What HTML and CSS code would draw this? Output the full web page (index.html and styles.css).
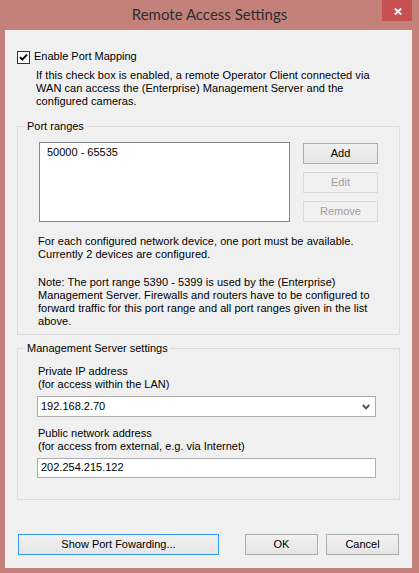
FILE: index.html
```html
<!DOCTYPE html>
<html>
<head>
<meta charset="utf-8">
<title>Remote Access Settings</title>
<link rel="stylesheet" href="styles.css">
</head>
<body>
<div class="window">
  <div class="titlebar">
    <span class="spacer"></span>
    <div class="title">Remote Access Settings</div>
    <div class="title-right">
      <button class="close" aria-label="Close">
        <svg width="8" height="7" viewBox="0 0 8 7"><path d="M0.8 0.5 L7.2 6.5 M7.2 0.5 L0.8 6.5" stroke="#fff" stroke-width="1.8" fill="none"/></svg>
      </button>
    </div>
  </div>
  <div class="client">
    <label class="check-row">
      <span class="checkbox">
        <svg width="11" height="11" viewBox="0 0 11 11"><polyline points="2,5.2 4.3,7.6 9,2.6" stroke="#000" stroke-width="1.9" fill="none"/></svg>
      </span>
      <span class="check-label">Enable Port Mapping</span>
    </label>
    <p class="desc">If this check box is enabled, a remote Operator Client connected via<br>WAN can access the (Enterprise) Management Server and the<br>configured cameras.</p>

    <fieldset class="group ports">
      <legend>Port ranges</legend>
      <div class="list-row">
        <div class="listbox"><div class="item">50000 - 65535</div></div>
        <div class="side-buttons">
          <button class="btn">Add</button>
          <button class="btn disabled">Edit</button>
          <button class="btn disabled">Remove</button>
        </div>
      </div>
      <p class="info">For each configured network device, one port must be available.<br>Currently 2 devices are configured.</p>
      <p class="note">Note: The port range 5390 - 5399 is used by the (Enterprise)<br>Management Server. Firewalls and routers have to be configured to<br>forward traffic for this port range and all port ranges given in the list<br>above.</p>
    </fieldset>

    <fieldset class="group server">
      <legend>Management Server settings</legend>
      <p class="field-label">Private IP address<br>(for access within the LAN)</p>
      <div class="combo">
        <span class="combo-text">192.168.2.70</span>
        <svg class="chev" width="8" height="6" viewBox="0 0 8 6"><polyline points="0.8,1 4,4.4 7.2,1" stroke="#555" stroke-width="2" fill="none"/></svg>
      </div>
      <p class="field-label second">Public network address<br>(for access from external, e.g. via Internet)</p>
      <div class="textbox">202.254.215.122</div>
    </fieldset>

    <div class="footer">
      <button class="btn wide focused">Show Port Fowarding...</button>
      <div class="dialog-buttons">
        <button class="btn small">OK</button>
        <button class="btn small">Cancel</button>
      </div>
    </div>
  </div>
</div>
</body>
</html>
```

FILE: styles.css
```css
html, body {
  margin: 0;
  padding: 0;
}

body {
  width: 419px;
  height: 573px;
  overflow: hidden;
  background: #c4807a;
  font-family: "Liberation Sans", Arial, sans-serif;
  font-size: 11px;
  color: #000;
}

.window {
  display: flex;
  flex-direction: column;
  height: 573px;
}

.titlebar {
  height: 30px;
  display: grid;
  grid-template-columns: 1fr auto 1fr;
  flex: none;
}

.title {
  font-family: Lato, "Open Sans", sans-serif;
  font-size: 15px;
  line-height: 18px;
  padding-top: 5px;
  color: #2e2e2e;
  white-space: nowrap;
}

.title-right {
  display: flex;
  justify-content: flex-end;
  align-items: flex-start;
}

.close {
  width: 30px;
  height: 21px;
  margin-right: 7px;
  border: 0;
  padding: 2px 0 0 2px;
  background: #c75050;
  display: flex;
  align-items: center;
  justify-content: center;
}

.client {
  flex: 1;
  margin: 0 7px 5px 5px;
  background: #f0f0f0;
  padding: 21px 0 13px 0;
  display: flex;
  flex-direction: column;
  box-sizing: border-box;
}

.check-row {
  display: flex;
  align-items: center;
  gap: 4px;
  margin-left: 12px;
  height: 13px;
  line-height: 13px;
}

.checkbox {
  width: 13px;
  height: 13px;
  box-sizing: border-box;
  border: 1px solid #333;
  background: #fff;
  display: flex;
  align-items: center;
  justify-content: center;
}

.check-label {
  margin-top: -2px;
}

.desc {
  margin: 5px 0 0 31px;
  line-height: 13px;
  letter-spacing: 0.05px;
}

.group {
  margin: 12px 12px 0 12px;
  border: 1px solid #dcdcdc;
  min-width: 0;
  box-sizing: border-box;
  width: 383px;
}

.group legend {
  padding: 0 2px;
  line-height: 13px;
  margin-left: -14px;
}

.ports {
  padding: 9px 21px 6px 21px;
}

.list-row {
  display: flex;
  gap: 13px;
}

.listbox {
  width: 251px;
  height: 80px;
  box-sizing: border-box;
  border: 1px solid #828790;
  background: #fff;
  padding: 3px 0 0 7px;
}

.item {
  line-height: 13px;
}

.side-buttons {
  display: flex;
  flex-direction: column;
  gap: 8px;
  margin-top: 1px;
}

.btn {
  width: 75px;
  height: 21px;
  box-sizing: border-box;
  border: 1px solid #adadad;
  background: linear-gradient(#f0f0f0, #e5e5e5);
  font-family: "Liberation Sans", Arial, sans-serif;
  font-size: 11px;
  line-height: 13px;
  color: #000;
  padding: 0;
  margin: 0;
}

.btn.disabled {
  border-color: #d9d9d9;
  background: #f0f0f0;
  color: #a0a0a0;
}

.info {
  margin: 13px 0 0 -1px;
  line-height: 13px;
  letter-spacing: 0.05px;
}

.note {
  margin: 15px 0 0 -1px;
  line-height: 13px;
  letter-spacing: 0.05px;
}

.server {
  margin-top: 7px;
  padding: 10px 23px 21px 19px;
}

.server legend {
  margin-left: -12px;
}

.field-label {
  margin: 0 0 0 1px;
  line-height: 13px;
}

.field-label.second {
  margin-top: 10px;
}

.combo {
  margin-top: 5px;
  height: 21px;
  box-sizing: border-box;
  border: 1px solid #acacac;
  background: #fff;
  display: flex;
  align-items: center;
  justify-content: space-between;
  padding: 0 5px 0 3px;
  line-height: 13px;
}

.textbox {
  margin-top: 5px;
  height: 20px;
  box-sizing: border-box;
  border: 1px solid #abadb3;
  background: #fff;
  padding: 2px 0 0 3px;
  line-height: 13px;
}

.footer {
  margin: auto 13px 0 13px;
  display: flex;
  justify-content: space-between;
}

.btn.wide {
  width: 201px;
}

.btn.focused {
  border-color: #3399ff;
}

.btn.small {
  width: 73px;
}

.dialog-buttons {
  display: flex;
  gap: 8px;
}
```
